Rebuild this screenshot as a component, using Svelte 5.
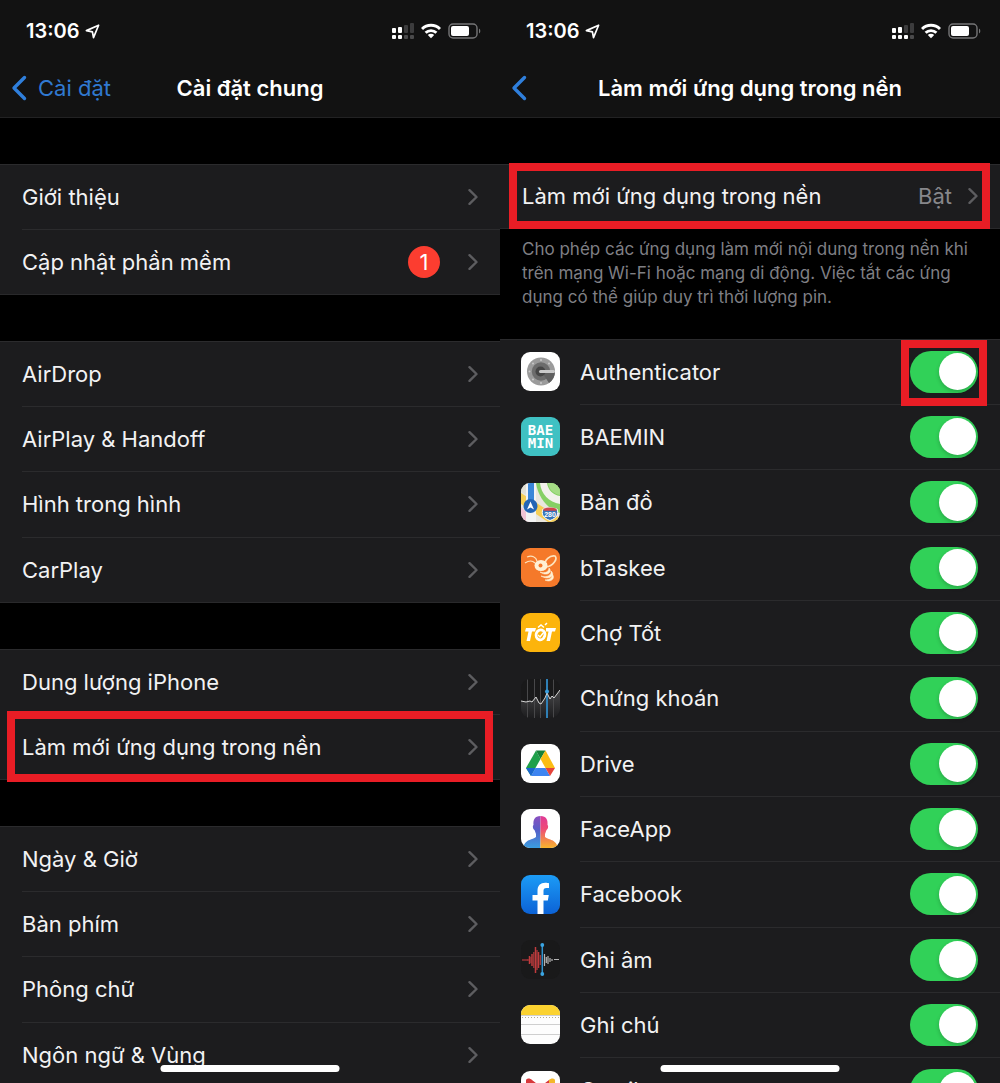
<script>
  const groups = [
    [{ label: 'Giới thiệu' }, { label: 'Cập nhật phần mềm', badge: 1 }],
    [
      { label: 'AirDrop' },
      { label: 'AirPlay & Handoff' },
      { label: 'Hình trong hình' },
      { label: 'CarPlay' }
    ],
    [{ label: 'Dung lượng iPhone' }, { label: 'Làm mới ứng dụng trong nền', marked: true }],
    [
      { label: 'Ngày & Giờ' },
      { label: 'Bàn phím' },
      { label: 'Phông chữ' },
      { label: 'Ngôn ngữ & Vùng' }
    ]
  ];

  let apps = $state([
    { id: 'authenticator', name: 'Authenticator', on: true, marked: true },
    { id: 'baemin', name: 'BAEMIN', on: true },
    { id: 'maps', name: 'Bản đồ', on: true },
    { id: 'btaskee', name: 'bTaskee', on: true },
    { id: 'chotot', name: 'Chợ Tốt', on: true },
    { id: 'stocks', name: 'Chứng khoán', on: true },
    { id: 'drive', name: 'Drive', on: true },
    { id: 'faceapp', name: 'FaceApp', on: true },
    { id: 'facebook', name: 'Facebook', on: true },
    { id: 'memos', name: 'Ghi âm', on: true },
    { id: 'notes', name: 'Ghi chú', on: true },
    { id: 'gmail', name: 'Gmail', on: true }
  ]);
</script>

{#snippet statusBar(litDots)}
  <div class="status">
    <span class="time">13:06</span>
    <svg class="location" width="15" height="15" viewBox="0 0 15 15" aria-hidden="true">
      <path d="M13.600 1.200 1.400 6.600l6 1.300 1.100 5.700z" fill="none" stroke="#fff" stroke-width="1.700" stroke-linejoin="round" />
    </svg>
    <span class="indicators">
      <svg width="22" height="16" viewBox="0 0 22 16" aria-hidden="true">
        {#each [5, 4, 2, 0] as top, i}
          <rect x={i * 6} y={top} width="4" height={10 - top} rx="1" fill={i < 2 ? '#fff' : '#3c3c3d'} />
          <rect x={i * 6} y="12" width="4" height="4" rx="1" fill={i < litDots ? '#fff' : '#4a4a4b'} />
        {/each}
      </svg>
      <svg width="20" height="16" viewBox="0 0 20 16" aria-hidden="true">
        <g fill="none" stroke="#fff" stroke-width="2.9">
          <path d="M1 6a12.8 12.8 0 0 1 18 0" />
          <path d="M4.6 9.8a7.7 7.7 0 0 1 10.8 0" />
        </g>
        <path d="M10 15.2 6.8 12a4.5 4.5 0 0 1 6.4 0z" fill="#fff" />
      </svg>
      <svg width="33" height="16" viewBox="0 0 33 16" aria-hidden="true">
        <rect x="1" y="1" width="28" height="14" rx="4" fill="none" stroke="#767677" stroke-width="1.4" />
        <rect x="3" y="3" width="18" height="10" rx="2" fill="#fff" />
        <path d="M31 5.500a3 3 0 0 1 0 5z" fill="#767677" />
      </svg>
    </span>
  </div>
{/snippet}

{#snippet backArrow()}
  <svg width="16" height="26" viewBox="0 0 16 26" aria-hidden="true">
    <path d="M13.500 2.500 3 13l10.500 10.500" fill="none" stroke="#2f7fdc" stroke-width="3.400" stroke-linecap="round" stroke-linejoin="round" />
  </svg>
{/snippet}

{#snippet chevron()}
  <svg class="chevron" width="10" height="16" viewBox="0 0 10 16" aria-hidden="true">
    <path d="M1.500 1.200 8.500 8l-7 6.800" fill="none" stroke="#5d5d60" stroke-width="2.400" stroke-linecap="round" stroke-linejoin="round" />
  </svg>
{/snippet}

{#snippet appIcon(id)}
  <svg class="app-icon" width="39" height="39" viewBox="0 0 39 39" aria-hidden="true">
    {#if id === 'authenticator'}
      <rect width="39" height="39" fill="#fff" />
      <circle cx="20" cy="19.500" r="14" fill="#9b9b9b" />
      <circle cx="20" cy="19.500" r="9.200" fill="#6c6c6c" />
      <path d="m24 25 4 6a14 14 0 0 0 6-11.500H20z" fill="#5f5f5f" />
      <circle cx="19.500" cy="19.500" r="5" fill="#464646" />
      <rect x="18" y="18" width="16" height="3" rx="1.500" fill="#c9c9c9" />
      <g fill="#c9c9c9">
        <circle cx="8.500" cy="19.500" r="1" /><circle cx="12" cy="11.500" r="1" /><circle cx="20" cy="8" r="1" />
        <circle cx="28" cy="11.500" r="1" /><circle cx="12" cy="27.500" r="1" /><circle cx="20" cy="31" r="1" />
      </g>
    {:else if id === 'baemin'}
      <rect width="39" height="39" fill="#3fc1c3" />
      <text class="mono-logo" x="19.500" y="18">BAE</text>
      <text class="mono-logo" x="19.500" y="31">MIN</text>
    {:else if id === 'maps'}
      <rect width="39" height="39" fill="#e9e6de" />
      <path d="M15 0h24v30C27 27 17 14 15 0z" fill="#86d064" />
      <path d="M19 0h7c1 7 6 12 13 13v8C28 19 20 11 19 0z" fill="#f3f2ec" />
      <path d="M27 0h12v12C32 11 28 6 27 0z" fill="#a5dc85" />
      <path d="M0 10 39 35v4H27L0 21z" fill="#f6ce55" />
      <path d="M0 0h6v12L0 9z" fill="#e2e0d6" />
      <path d="M0 24l15 15H0z" fill="#f0c3d5" />
      <path d="M5 0h10v39H5z" fill="#f3f3f3" />
      <path d="M7 0h6v20H7z" fill="#3a86d8" />
      <circle cx="9.500" cy="23" r="7" fill="#2365b5" />
      <path d="m9.500 18.500 3.500 8-3.500-2-3.500 2z" fill="#fff" />
      <path d="M22 26q7-3 14 0c2 5 0 9-7 11.500-7-2.500-9-6.500-7-11.500z" fill="#3473b8" stroke="#fff" />
      <path d="M22.500 25.800q6.500-2.500 13 0v2h-13z" fill="#d0454b" />
      <text class="shield" x="29" y="34">280</text>
    {:else if id === 'btaskee'}
      <rect width="39" height="39" fill="#f5792a" />
      <g fill="none" stroke="#fde3bd" stroke-width="1.200">
        <path d="M16 13c-1-4-5-6-10-4M14 15c-3-3-7-2-10 0" />
        <path d="M24 18c-1-6 5-11 10-10 3 3-2 10-9 11z" stroke-width="1.700" />
      </g>
      <ellipse cx="20" cy="17.500" rx="6.500" ry="5.500" fill="#fff0d4" />
      <circle cx="19.500" cy="17.500" r="2" fill="#f5792a" />
      <path d="M19 24c6 2 9-1 9-4 4 4-2 9-9 4zM20 28c6 2 11-1 10-5 5 4-2 10-10 5zM24 32c5 0 8-3 7-6 4 4-1 9-7 6z" fill="#fff0d4" stroke="#fff0d4" stroke-width="0.600" />
    {:else if id === 'chotot'}
      <rect width="39" height="39" fill="#fcb40c" />
      <path d="M5 15h10l-1 3.500h-3L9 28H5.500l2-9.500H4zM25 15h10l-1 3.500h-3L29 28h-3.500l2-9.500H25z" fill="#fff" />
      <ellipse cx="19.500" cy="21.800" rx="4.400" ry="5" transform="rotate(18 19.500 21.800)" fill="none" stroke="#fff" stroke-width="2.800" />
      <path d="m17 22 2 2 4-5M17 14.500l3-2.500 3 2.500M24 12l2-2" fill="none" stroke="#fff" stroke-width="1.500" />
    {:else if id === 'stocks'}
      <defs>
        <linearGradient id="stock-fade" x2="0" y2="1">
          <stop offset="0" stop-color="#464648" /><stop offset="1" stop-color="#1c1c1e" />
        </linearGradient>
      </defs>
      <rect width="39" height="39" fill="#19191a" />
      <path d="m0 22 5 1 4-1 2 1 4-5 3 6 2 1 4-6 2-5 3 6 2-3 2 2 6-8v28H0z" fill="url(#stock-fade)" />
      <path d="M6.500 0v39M13.500 0v39M19.500 0v39M32.500 0v39" stroke="#48484a" />
      <path d="M26 0v39" stroke="#2f7fb5" stroke-width="2" />
      <path d="m0 22 5 1 4-1 2 1 4-5 3 6 2 1 4-6 2-5 3 6 2-3 2 2 6-8" fill="none" stroke="#d5d5d5" />
      <circle cx="26" cy="12.500" r="2" fill="#3aa0e0" />
    {:else if id === 'drive'}
      <rect width="39" height="39" fill="#fff" />
      <path d="M15 6.500 5 24l5 8 9.500-17z" fill="#1fa04b" />
      <path d="M15 6.500h9.500L19.500 15z" fill="#158038" />
      <path d="M24.500 6.500 34 24h-9.500l-5-9z" fill="#fbbc14" />
      <path d="M5 24h9.500L10 32z" fill="#1a66d0" />
      <path d="M14.500 24h10l4.500 8H10z" fill="#3d84f0" />
      <path d="M24.500 24H34l-5 8z" fill="#e5433a" />
    {:else if id === 'faceapp'}
      <defs>
        <linearGradient id="face-left" x2="0" y2="1">
          <stop offset="0" stop-color="#8b4fc0" /><stop offset=".45" stop-color="#5560c8" /><stop offset="1" stop-color="#3a9ee0" />
        </linearGradient>
        <linearGradient id="face-right" x2="0" y2="1">
          <stop offset="0" stop-color="#e03a96" /><stop offset=".4" stop-color="#ee4c76" /><stop offset="1" stop-color="#f7b42c" />
        </linearGradient>
      </defs>
      <rect width="39" height="39" fill="#fff" />
      <path d="M19.500 7c-6 0-7.500 4-7 9-1.500 1 0 5 1 5l1.500 4v3c-4 3-9 2-12 8v3h16.500z" fill="url(#face-left)" />
      <path d="M19.500 7c6 0 7.500 4 7 9 1.500 1 0 5-1 5L24 25v3c4 3 9 2 12 8v3H19.500z" fill="url(#face-right)" />
    {:else if id === 'facebook'}
      <defs>
        <linearGradient id="fb-blue" x2="0" y2="1">
          <stop offset="0" stop-color="#1c9cf6" /><stop offset="1" stop-color="#0c62d6" />
        </linearGradient>
      </defs>
      <rect width="39" height="39" fill="url(#fb-blue)" />
      <path d="M16.500 39V25.500h-5V20h5v-4.200c0-5.300 3-8 7.700-8 1.600 0 3 .2 3.800.4v4.900h-2.500c-2.300 0-3 1.200-3 2.900v4h5.300l-1 5.500h-4.300V39z" fill="#fff" />
    {:else if id === 'memos'}
      <rect width="39" height="39" fill="#19191a" />
      <path d="M1 20h6M7 19v2" stroke="#963236" stroke-width="1.300" />
      <path d="M8.500 16v8M11 14v12M14.500 7v26M17.500 12v16" stroke="#c13b3d" stroke-width="1.500" />
      <path d="M10 17v6M12.800 12v16M16 10v20M19.300 15v10" stroke="#a83a3c" stroke-width="1.300" />
      <path d="M23.500 14v12M25.300 17v6M27 16v8M29 18v4M31 19v2M33 19.500h5" stroke="#b5b5b6" stroke-width="1.200" />
      <path d="M21.300 5v29" stroke="#3193cf" stroke-width="1.500" />
      <circle cx="21.300" cy="5" r="1.900" fill="#3ba5e3" /><circle cx="21.300" cy="34" r="1.900" fill="#3ba5e3" />
    {:else if id === 'notes'}
      <rect width="39" height="39" fill="#fdfdfd" />
      <rect width="39" height="10" fill="#fbd230" />
      <path d="M0 10.500h39M0 19.500h39M0 29.500h39" stroke="#cfcfcf" />
      <path d="M1 12.500h38" stroke="#b5ad8e" stroke-dasharray="1 2" />
    {:else}
      <rect width="39" height="39" fill="#fff" />
      <path d="M5 12v18h6V17l8.500 6.500L28 17v13h6V12z" fill="#4285f4" />
      <path d="M5 13V9c1-2 4-2 6 0l8.500 6.500L28 9v8l-8.500 6.500L11 17z" fill="#d7373a" />
      <path d="M28 9c2-2 5-2 6 0v4l-6 4z" fill="#f4b72a" />
    {/if}
  </svg>
{/snippet}

<main class="screens">
  <section class="screen" aria-label="Cài đặt chung">
    <header>
      {@render statusBar(2)}
      <nav>
        <a class="back" href="#settings">{@render backArrow()}<span>Cài đặt</span></a>
        <h1>Cài đặt chung</h1>
      </nav>
    </header>
    {#each groups as group}
      <ul class="group">
        {#each group as row}
          <li class="row" class:marked={row.marked}>
            <a href="#detail">
              <span class="label">{row.label}</span>
              {#if row.badge}<span class="badge">{row.badge}</span>{/if}
              {@render chevron()}
            </a>
          </li>
        {/each}
      </ul>
    {/each}
    <div class="home-bar"></div>
  </section>

  <section class="screen" aria-label="Làm mới ứng dụng trong nền">
    <header>
      {@render statusBar(3)}
      <nav>
        <a class="back" href="#general" aria-label="Cài đặt chung">{@render backArrow()}</a>
        <h1>Làm mới ứng dụng trong nền</h1>
      </nav>
    </header>
    <ul class="group with-note">
      <li class="row marked single">
        <a href="#mode">
          <span class="label">Làm mới ứng dụng trong nền</span>
          <span class="value">Bật</span>
          {@render chevron()}
        </a>
      </li>
    </ul>
    <p class="note">
      Cho phép các ứng dụng làm mới nội dung trong nền khi trên mạng Wi-Fi hoặc mạng di động. Việc tắt các ứng dụng có thể giúp duy trì thời lượng pin.
    </p>
    <ul class="group">
      {#each apps as app (app.id)}
        <li class="row app">
          {@render appIcon(app.id)}
          <label class="label" for={app.id}>{app.name}</label>
          <span class="switch" class:marked={app.marked}>
            <input id={app.id} type="checkbox" role="switch" bind:checked={app.on} />
          </span>
        </li>
      {/each}
    </ul>
    <div class="home-bar"></div>
  </section>
</main>

<style>
  :global(body) {
    margin: 0;
    background: #000;
  }
  .screens {
    display: grid;
    grid-template-columns: 1fr 1fr;
    height: 100vh;
    overflow: hidden;
    font-family: Inter, 'Liberation Sans', sans-serif;
    font-size: 22px;
    color: #f2f2f3;
  }
  .screen {
    position: relative;
    overflow: hidden;
    background: #000;
  }
  header {
    background: #121212;
    border-bottom: 1px solid #222223;
    margin-bottom: 46px;
  }
  .status {
    display: flex;
    align-items: center;
    height: 62px;
    padding: 0 19px 0 26px;
  }
  .time {
    font-size: 20px;
    font-weight: 600;
    color: #fff;
  }
  .location {
    margin-left: 5px;
  }
  .indicators {
    display: flex;
    align-items: center;
    gap: 7px;
    margin-left: auto;
  }
  nav {
    display: grid;
    grid-template-columns: 1fr auto 1fr;
    align-items: center;
    height: 52px;
    padding: 0 11px 3px;
  }
  .back {
    display: flex;
    align-items: center;
    gap: 11px;
    color: #3079d0;
    text-decoration: none;
  }
  h1 {
    grid-column: 2;
    margin: 0;
    font-size: 22px;
    font-weight: 600;
    color: #fff;
  }
  .group {
    margin: 0 0 46px;
    padding: 0;
    list-style: none;
    background: #1c1c1e;
    border-bottom: 1px solid #29292b;
  }
  .group.with-note {
    margin-bottom: 8px;
  }
  .row {
    position: relative;
    box-sizing: border-box;
    height: 65px;
  }
  .row:nth-child(3n) {
    height: 66px;
  }
  .row.single {
    height: 64px;
  }
  .row::before {
    content: '';
    position: absolute;
    top: 0;
    right: 0;
    left: 22px;
    border-top: 1px solid #2b2b2d;
  }
  .row:first-child::before {
    left: 0;
  }
  .row a {
    display: flex;
    align-items: center;
    height: 100%;
    padding: 0 22px;
    color: inherit;
    text-decoration: none;
  }
  .label {
    flex: 1;
  }
  .value {
    margin-right: 16px;
    color: #87878b;
  }
  .badge {
    width: 32px;
    margin-right: 28px;
    border-radius: 50%;
    background: #fc3d30;
    color: #fff;
    line-height: 32px;
    text-align: center;
  }
  .row.marked::after,
  .switch.marked::after {
    content: '';
    position: absolute;
    z-index: 1;
    inset: -3px 7px;
    border: 8px solid #e91d25;
    pointer-events: none;
  }
  .row.single::after {
    inset: -1px 10px -1px 9px;
  }
  .switch.marked::after {
    inset: -11px -9px -13px;
  }
  .note {
    margin: 0 22px 30px;
    font-size: 17px;
    line-height: 24px;
    color: #7f7f84;
  }
  .app {
    display: flex;
    align-items: center;
    padding: 0 22px 0 21px;
  }
  .app:not(:first-child)::before {
    left: 80px;
  }
  .app-icon {
    margin-right: 20px;
    border-radius: 9px;
  }
  .mono-logo {
    font: 700 14px 'DejaVu Sans Mono', monospace;
    fill: #fff;
    text-anchor: middle;
  }
  .shield {
    font: 700 7px 'Liberation Sans', sans-serif;
    fill: #fff;
    text-anchor: middle;
  }
  .switch {
    position: relative;
    display: flex;
  }
  .switch input {
    appearance: none;
    display: flex;
    align-items: center;
    box-sizing: border-box;
    width: 68px;
    height: 42px;
    margin: 0;
    padding: 0 2px;
    border-radius: 21px;
    background: #39393d;
  }
  .switch input::before {
    content: '';
    width: 37px;
    height: 37px;
    border-radius: 50%;
    background: #fff;
    box-shadow: 0 2px 4px #0003;
  }
  .switch input:checked {
    justify-content: flex-end;
    background: #31d158;
  }
  .home-bar {
    position: absolute;
    z-index: 2;
    bottom: 11px;
    left: 50%;
    width: 179px;
    height: 7px;
    border-radius: 4px;
    background: #fff;
    transform: translateX(-50%);
  }
</style>
